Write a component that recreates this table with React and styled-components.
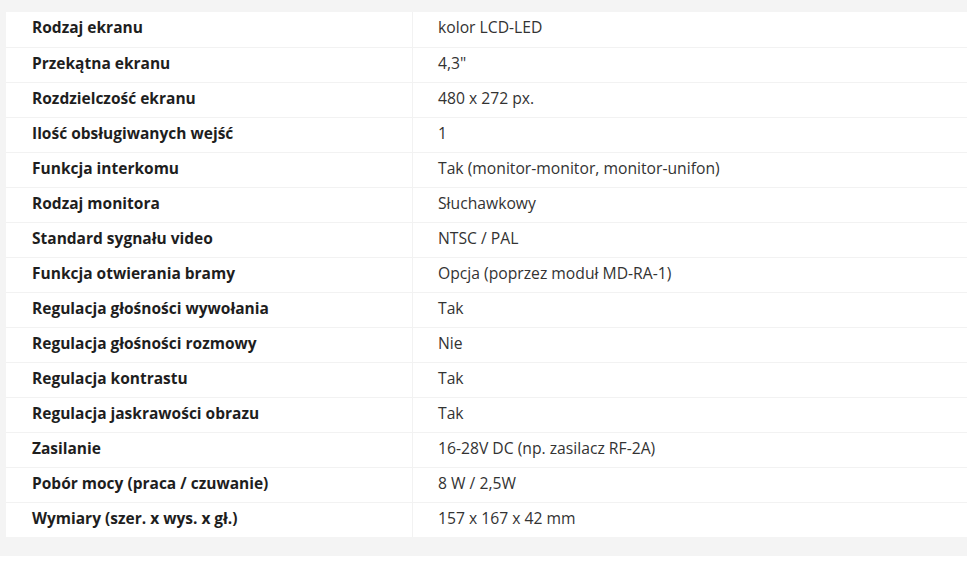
import React from 'react';
import styled, { createGlobalStyle } from 'styled-components';

const GlobalStyle = createGlobalStyle`
  html, body {
    margin: 0;
    padding: 0;
    background: #ffffff;
  }
`;

const Page = styled.div`
  background: #f4f4f4;
  padding: 12px 0 19px 6px;
  font-family: 'Open Sans', 'Liberation Sans', sans-serif;
`;

const SpecTable = styled.table`
  width: 100%;
  border-collapse: collapse;
  background: #ffffff;
`;

const Row = styled.tr`
  height: 35px;
  border-bottom: 1px solid #f2f2f2;

  &:last-child {
    border-bottom: none;
  }
`;

const Label = styled.td`
  width: 380px;
  padding: 0 0 4px 26px;
  font-size: 15.5px;
  font-weight: 700;
  color: #1e1e1e;
  border-right: 1px solid #f2f2f2;
`;

const Value = styled.td`
  padding: 0 0 4px 25px;
  font-size: 15.7px;
  color: #333333;
`;

const specs = [
  ['Rodzaj ekranu', 'kolor LCD-LED'],
  ['Przekątna ekranu', '4,3"'],
  ['Rozdzielczość ekranu', '480 x 272 px.'],
  ['Ilość obsługiwanych wejść', '1'],
  ['Funkcja interkomu', 'Tak (monitor-monitor, monitor-unifon)'],
  ['Rodzaj monitora', 'Słuchawkowy'],
  ['Standard sygnału video', 'NTSC / PAL'],
  ['Funkcja otwierania bramy', 'Opcja (poprzez moduł MD-RA-1)'],
  ['Regulacja głośności wywołania', 'Tak'],
  ['Regulacja głośności rozmowy', 'Nie'],
  ['Regulacja kontrastu', 'Tak'],
  ['Regulacja jaskrawości obrazu', 'Tak'],
  ['Zasilanie', '16-28V DC (np. zasilacz RF-2A)'],
  ['Pobór mocy (praca / czuwanie)', '8 W / 2,5W'],
  ['Wymiary (szer. x wys. x gł.)', '157 x 167 x 42 mm'],
];

const App = () => {
  return (
    <>
      <GlobalStyle />
      <Page>
        <SpecTable>
          <tbody>
            {specs.map(([label, value]) => (
              <Row key={label}>
                <Label>{label}</Label>
                <Value>{value}</Value>
              </Row>
            ))}
          </tbody>
        </SpecTable>
      </Page>
    </>
  );
};

export default App;
